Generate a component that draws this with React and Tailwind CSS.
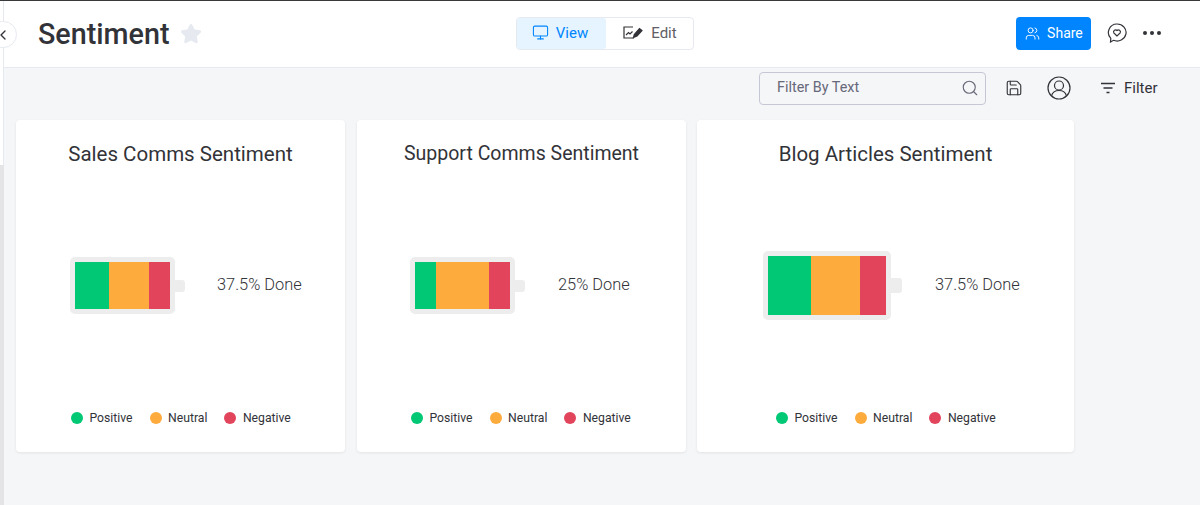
import { ChevronLeft, Monitor, Search, Star, Users, Save } from 'lucide-react'

const font = { fontFamily: 'Roboto, sans-serif' }

const cards = [
  { title: 'Sales Comms Sentiment', titleSize: 'text-[20.5px]', width: 'w-[329px]', pad: 'pl-[54px]', gap: 'ml-[32px]', label: '37.5% Done', inner: 'w-[95px] h-[47px]', nub: 'w-[10px] h-[12px]', segs: ['w-[34px]', 'w-[40px]', 'w-[21px]'], legendPad: 'pl-[55px]' },
  { title: 'Support Comms Sentiment', titleSize: 'text-[19.5px]', width: 'w-[329px]', pad: 'pl-[53px]', gap: 'ml-[33px]', label: '25% Done', inner: 'w-[95px] h-[47px]', nub: 'w-[10px] h-[12px]', segs: ['w-[21px]', 'w-[53px]', 'w-[21px]'], legendPad: 'pl-[54px]' },
  { title: 'Blog Articles Sentiment', titleSize: 'text-[20.5px]', width: 'w-[377px] -ml-[1px]', pad: 'pl-[66px]', gap: 'ml-[33px]', label: '37.5% Done', inner: 'w-[118px] h-[59px]', nub: 'w-[11px] h-[15px]', segs: ['w-[43px]', 'w-[49px]', 'w-[26px]'], legendPad: 'pl-[79px]' },
]

function Battery({ card }) {
  return (
    <div className="flex items-center">
      <div className="p-[5px] bg-[#ededed] rounded-[5px]">
        <div className={`flex ${card.inner}`}>
          <div className={`${card.segs[0]} bg-[#00c875]`} />
          <div className={`${card.segs[1]} bg-[#fdab3d]`} />
          <div className={`${card.segs[2]} bg-[#e2445c]`} />
        </div>
      </div>
      <div className={`${card.nub} bg-[#ededed] rounded-r-[3px]`} />
    </div>
  )
}

function Legend({ color, label }) {
  return (
    <div className="flex items-center gap-[6.5px]">
      <span className={`w-[12px] h-[12px] rounded-full ${color}`} />
      <span className="text-[12.2px] leading-[16px] text-[#323338]">{label}</span>
    </div>
  )
}

function Card({ card }) {
  return (
    <div className={`${card.width} h-[332px] bg-white rounded-[4px] shadow-[0_1px_3px_rgba(0,0,0,0.08)] flex flex-col`}>
      <h2 className={`mt-[20.5px] h-[26px] text-center ${card.titleSize} leading-[26px] text-[#323338]`}>{card.title}</h2>
      <div className={`flex-1 flex items-center pb-[5px] ${card.pad}`}>
        <Battery card={card} />
        <span className={`${card.gap} text-[16.4px] font-light text-[#323338]`}>{card.label}</span>
      </div>
      <div className={`flex items-center gap-[17px] mb-[26px] ${card.legendPad}`}>
        <Legend color="bg-[#00c875]" label="Positive" />
        <Legend color="bg-[#fdab3d]" label="Neutral" />
        <Legend color="bg-[#e2445c]" label="Negative" />
      </div>
    </div>
  )
}

export default function App() {
  return (
    <div style={font} className="relative w-[1200px] h-[505px] overflow-hidden flex bg-[#f5f6f8] border-t border-[#3a3a3a]">
      <div className="w-[4px] flex flex-col">
        <div className="h-[164px] bg-white border-r border-[#e6e9ef]" />
        <div className="flex-1 bg-[#e4e4e6]" />
      </div>

      <button className="absolute z-10 left-[-12px] top-[20px] w-[29px] h-[27px] rounded-full bg-white border border-[#e6e9ef] flex items-center justify-end pr-[5px] text-[#323338]">
        <ChevronLeft size={16} />
      </button>

      <div className="flex-1 flex flex-col">
        <header className="h-[67px] bg-white border-b border-[#e6e9ef] flex items-center">
          <h1 className="ml-[34px] text-[28.7px] font-medium text-[#323338] leading-none">Sentiment</h1>
          <Star size={22} className="ml-[11px] text-[#e6e9ef] fill-[#e6e9ef]" />

          <div className="ml-[314px] w-[178px] h-[33px] mb-[2px] border border-[#e6e9ef] rounded-[4px] flex text-[15px] leading-[20px]">
            <div className="w-[89px] bg-[#e5f4ff] rounded-[3px] flex items-center justify-center gap-[7px] pr-[4px] pb-[1px] text-[#0085ff]">
              <Monitor size={17} strokeWidth={1.5} />
              <span>View</span>
            </div>
            <div className="flex-1 flex items-center justify-center gap-[8px] pb-[1px] text-[#5f6066]">
              <svg width="20" height="13" viewBox="0 0 20 13" fill="none" stroke="#323338" strokeWidth="1.2">
                <path d="M10 1H1v11h10" />
                <path d="M3 9l2.500-2.500 1.500 1.500 2.500-2.500" />
                <path d="M10.500 11.500l.8-3L16.500 2.500l2.500 2-5 5.500z" fill="#323338" />
              </svg>
              <span>Edit</span>
            </div>
          </div>

          <button className="ml-[322px] w-[75px] h-[33px] mb-[2px] bg-[#0085ff] rounded-[4px] text-white text-[14px] flex items-center justify-center gap-[7px]">
            <Users size={15} strokeWidth={1.5} />
            <span>Share</span>
          </button>

          <svg className="ml-[16px] mb-[3px]" width="20" height="20" viewBox="0 0 20 20" fill="none" stroke="#323338" strokeWidth="1.2">
            <path d="M10 1a9 8.500 0 1 1-3.500 16.300L3.500 19l.3-3.600A8.500 8.500 0 0 1 10 1z" />
            <path d="M10 13L6.800 9.800a2 2 0 0 1 3.200-2.300 2 2 0 0 1 3.200 2.300z" />
          </svg>
          <div className="ml-[16px] mb-[3px] flex gap-[3px]">
            <span className="w-[4px] h-[4px] rounded-full bg-[#323338]" />
            <span className="w-[4px] h-[4px] rounded-full bg-[#323338]" />
            <span className="w-[4px] h-[4px] rounded-full bg-[#323338]" />
          </div>
        </header>

        <div className="h-[40px] flex items-center">
          <div className="ml-[755px] w-[227px] h-[33px] border border-[#c5c7d4] rounded-[4px] flex items-center justify-between pl-[17px] pr-[6px] text-[14.4px] text-[#676879]">
            <span>Filter By Text</span>
            <Search size={18} strokeWidth={1.5} />
          </div>
          <Save size={18} strokeWidth={1.5} className="ml-[19px] text-[#323338]" />
          <svg className="ml-[24px]" width="24" height="24" viewBox="0 0 24 24" fill="none" stroke="#323338" strokeWidth="1.2">
            <circle cx="12" cy="12" r="11" />
            <circle cx="12" cy="9.500" r="4.500" />
            <path d="M4.500 20c1-4 4-5.500 7.500-5.500s6.500 1.500 7.500 5.500" />
          </svg>
          <svg className="ml-[30px]" width="14" height="12" viewBox="0 0 14 12" fill="none" stroke="#323338" strokeWidth="1.5">
            <path d="M0 1.500h14M2.500 6h9M5.500 10.500h3" />
          </svg>
          <span className="ml-[9px] text-[15px] text-[#323338]">Filter</span>
        </div>

        <main className="mt-[12px] ml-[12px] flex gap-[12px]">
          {cards.map((card) => (
            <Card key={card.title} card={card} />
          ))}
        </main>
      </div>
    </div>
  )
}
